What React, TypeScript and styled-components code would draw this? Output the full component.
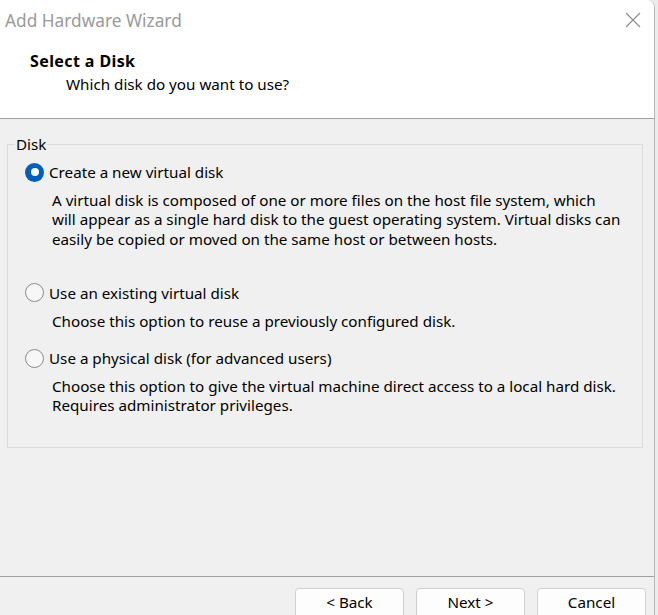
import React, { useState } from 'react';
import styled, { createGlobalStyle } from 'styled-components';

const GlobalStyle = createGlobalStyle`
  html, body {
    margin: 0;
    padding: 0;
    background: #ececec;
    overflow: hidden;
  }
  body {
    font-family: "Noto Sans", "Open Sans", Arial, sans-serif;
  }
`;

const Window = styled.div`
  display: flex;
  flex-direction: column;
  width: 655px;
  height: 615px;
  box-sizing: border-box;
  border-right: 1px solid #b8b8b8;
  border-top-right-radius: 8px;
  overflow: hidden;
  background: #f0f0f0;
`;

const Header = styled.div`
  display: flex;
  flex-direction: column;
  height: 118px;
  background: #fff;
  border-bottom: 1px solid #a0a0a0;
  flex-shrink: 0;
`;

const TitleBar = styled.div`
  display: flex;
  align-items: center;
  justify-content: space-between;
  height: 42px;
  padding: 0 11px 0 5px;
`;

const Title = styled.span`
  font-size: 17.3px;
  color: #9a9a9a;
  margin-top: -1px;
`;

const CloseButton = styled.button`
  display: flex;
  align-items: center;
  justify-content: center;
  width: 20px;
  height: 20px;
  padding: 0;
  border: none;
  background: transparent;
  margin-top: -3px;
  cursor: pointer;
`;

const HeaderText = styled.div`
  display: flex;
  flex-direction: column;
  padding: 9px 0 0 30px;
`;

const Heading = styled.span`
  font-size: 16px;
  font-weight: 700;
  letter-spacing: 0.4px;
  color: #000;
  line-height: 20px;
`;

const SubHeading = styled.span`
  font-size: 15.2px;
  color: #000;
  line-height: 20px;
  margin: 3px 0 0 36px;
`;

const Body = styled.div`
  flex: 1;
  padding: 15px 11px 0 7px;
`;

const GroupBox = styled.fieldset`
  margin: 0;
  padding: 8px 0 0 17px;
  height: 314px;
  box-sizing: border-box;
  border: 1px solid #dcdcdc;
  border-radius: 0;
`;

const Legend = styled.legend`
  font-size: 15.2px;
  line-height: 20px;
  padding: 0 1px;
  margin-left: -10px;
  color: #000;
`;

const Option = styled.div<{ gapAfter: number }>`
  display: flex;
  flex-direction: column;
  margin-bottom: ${(p) => p.gapAfter}px;
`;

const RadioRow = styled.label`
  display: flex;
  align-items: center;
  gap: 5px;
  height: 20px;
  font-size: 15.2px;
  color: #000;
  cursor: default;
`;

const RadioCircle = styled.span<{ checked: boolean }>`
  display: inline-flex;
  align-items: center;
  justify-content: center;
  width: 19px;
  height: 19px;
  box-sizing: border-box;
  border-radius: 50%;
  border: ${(p) => (p.checked ? 'none' : '1px solid #8a8a8a')};
  background: ${(p) => (p.checked ? '#005fb8' : '#f7f7f7')};
  flex-shrink: 0;

  &::after {
    content: '';
    display: ${(p) => (p.checked ? 'block' : 'none')};
    width: 8px;
    height: 8px;
    border-radius: 50%;
    background: #fff;
  }
`;

const Description = styled.p`
  margin: 9px 0 0 27px;
  font-size: 15.2px;
  line-height: 19.3px;
  color: #000;
  white-space: pre-line;
`;

const Footer = styled.div`
  display: flex;
  justify-content: flex-end;
  gap: 12px;
  flex-shrink: 0;
  height: 39px;
  box-sizing: border-box;
  padding: 11px 8px 0 0;
  border-top: 1px solid #a0a0a0;
`;

const Button = styled.button`
  width: 109px;
  height: 32px;
  box-sizing: border-box;
  border: 1px solid #d0d0d0;
  border-radius: 4px;
  background: #fdfdfd;
  font-family: inherit;
  font-size: 15.2px;
  color: #000;
  padding: 0 0 5px;
`;

const options = [
  {
    label: 'Create a new virtual disk',
    text:
      'A virtual disk is composed of one or more files on the host file system, which\nwill appear as a single hard disk to the guest operating system. Virtual disks can\neasily be copied or moved on the same host or between hosts.',
    gap: 34,
  },
  {
    label: 'Use an existing virtual disk',
    text: 'Choose this option to reuse a previously configured disk.',
    gap: 17,
  },
  {
    label: 'Use a physical disk (for advanced users)',
    text:
      'Choose this option to give the virtual machine direct access to a local hard disk.\nRequires administrator privileges.',
    gap: 0,
  },
];

const CloseIcon = () => (
  <svg width="16" height="16" viewBox="0 0 16 16">
    <path d="M1 1 L15 15 M15 1 L1 15" stroke="#8c8c8c" strokeWidth="1.1" fill="none" />
  </svg>
);

const App: React.FC = () => {
  const [selected, setSelected] = useState(0);

  return (
    <>
      <GlobalStyle />
      <Window>
        <Header>
          <TitleBar>
            <Title>Add Hardware Wizard</Title>
            <CloseButton aria-label="Close">
              <CloseIcon />
            </CloseButton>
          </TitleBar>
          <HeaderText>
            <Heading>Select a Disk</Heading>
            <SubHeading>Which disk do you want to use?</SubHeading>
          </HeaderText>
        </Header>
        <Body>
          <GroupBox>
            <Legend>Disk</Legend>
            {options.map((o, i) => (
              <Option key={o.label} gapAfter={o.gap}>
                <RadioRow onClick={() => setSelected(i)}>
                  <RadioCircle checked={selected === i} />
                  {o.label}
                </RadioRow>
                <Description>{o.text}</Description>
              </Option>
            ))}
          </GroupBox>
        </Body>
        <Footer>
          <Button>&lt; Back</Button>
          <Button>Next &gt;</Button>
          <Button>Cancel</Button>
        </Footer>
      </Window>
    </>
  );
};

export default App;
